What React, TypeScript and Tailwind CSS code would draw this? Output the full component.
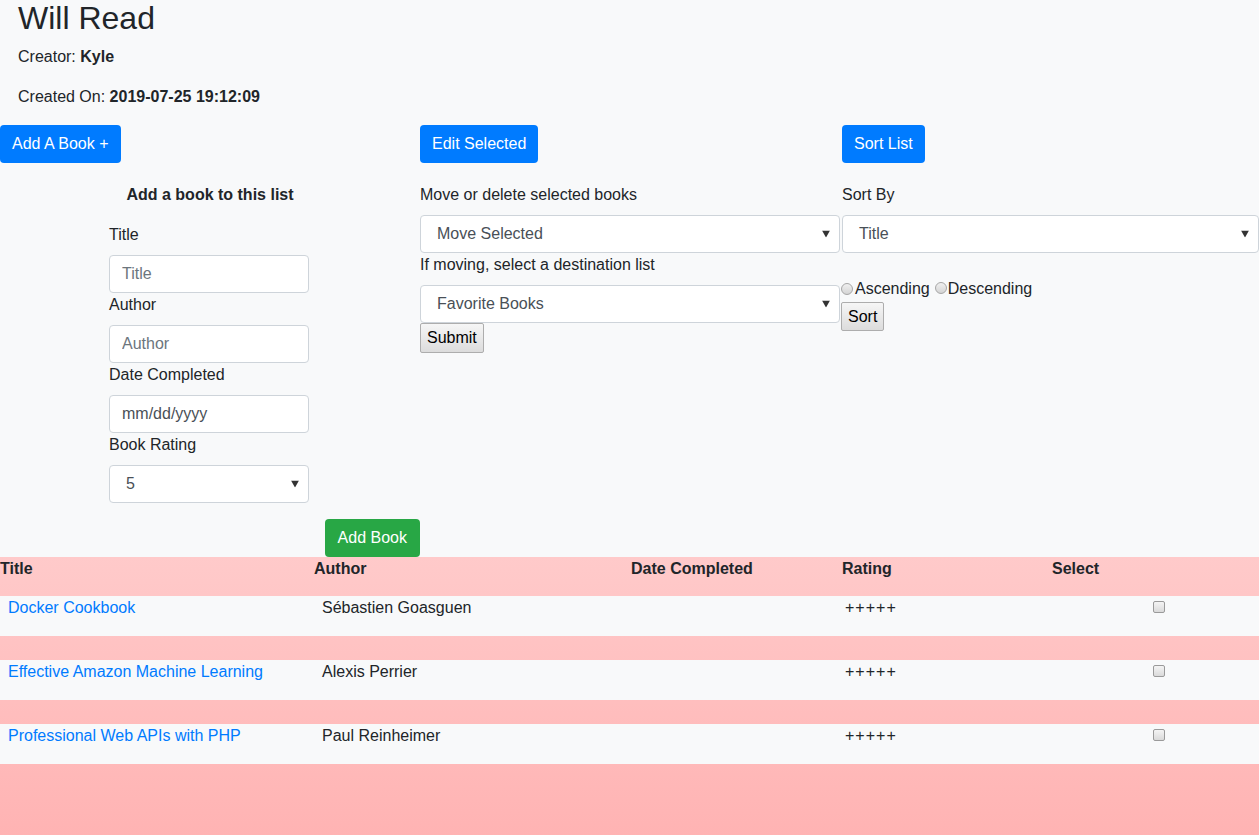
import type { ReactNode } from "react";

const books = [
  { title: "Docker Cookbook", author: "Sébastien Goasguen" },
  { title: "Effective Amazon Machine Learning", author: "Alexis Perrier" },
  { title: "Professional Web APIs with PHP", author: "Paul Reinheimer" },
];

const Caret = () => (
  <svg
    width="8"
    height="7"
    viewBox="0 0 8 7"
    className="pointer-events-none absolute right-[9px] top-1/2 -translate-y-1/2"
  >
    <polygon points="0,0 8,0 4,7" fill="#333" />
  </svg>
);

const FakeSelect = ({ value, className }: { value: string; className: string }) => (
  <div
    className={`relative flex h-[38px] items-center rounded border border-[#ced4da] bg-white pl-4 text-[#495057] ${className}`}
  >
    {value}
    <Caret />
  </div>
);

const TextInput = ({ placeholder, dark }: { placeholder: string; dark?: boolean }) => (
  <input
    type="text"
    placeholder={placeholder}
    className={`h-[38px] w-[200px] rounded border border-[#ced4da] bg-white px-3 outline-none ${
      dark ? "placeholder:text-[#495057]" : "placeholder:text-[#6c757d]"
    }`}
  />
);

const PrimaryButton = ({ children, className = "" }: { children: ReactNode; className?: string }) => (
  <button className={`h-[38px] self-start rounded bg-[#007bff] px-3 text-white ${className}`}>
    {children}
  </button>
);

const PlainButton = ({ children, className = "" }: { children: ReactNode; className?: string }) => (
  <button
    className={`self-start rounded-[2px] border border-[#adadad] bg-linear-to-b from-[#f6f6f6] to-[#dcdcdc] px-[6px] text-black ${className}`}
  >
    {children}
  </button>
);

const Radio = () => (
  <span className="inline-block h-3 w-3 rounded-full border border-[#a6a6a6] bg-linear-to-b from-[#f0f0f0] to-[#d4d4d4]" />
);

const Checkbox = () => (
  <span className="mt-[5px] inline-block h-[12px] w-[12px] rounded-[2px] border border-[#9a9a9a] bg-linear-to-b from-[#f4f4f4] to-[#dadada]" />
);

export default function App() {
  return (
    <div className="flex min-h-screen flex-col overflow-hidden bg-[#f8f9fa] font-['Liberation_Sans',Arial,sans-serif] text-base leading-6 text-[#212529]">
      {/* Header */}
      <div className="pl-[18px]">
        <h2 className="mb-2 text-[32px] leading-[37px]">Will Read</h2>
        <p className="mb-4">
          Creator: <b>Kyle</b>
        </p>
        <p className="mb-4">
          Created On: <b>2019-07-25 19:12:09</b>
        </p>
      </div>

      {/* Three panels */}
      <div className="grid grid-cols-[420px_421px_1fr]">
        <div className="flex flex-col">
          <PrimaryButton>Add A Book +</PrimaryButton>
          <h5 className="mt-5 mb-4 text-center font-bold">Add a book to this list</h5>
          <div className="ml-[109px] flex w-[200px] flex-col">
            <label className="mb-2">Title</label>
            <TextInput placeholder="Title" />
            <label className="mb-2">Author</label>
            <TextInput placeholder="Author" />
            <label className="mb-2">Date Completed</label>
            <TextInput placeholder="mm/dd/yyyy" dark />
            <label className="mb-2">Book Rating</label>
            <FakeSelect value="5" className="w-[200px]" />
          </div>
          <button className="mt-4 h-[38px] self-end rounded bg-[#28a745] px-[13px] text-white">Add Book</button>
        </div>

        <div className="flex flex-col">
          <PrimaryButton>Edit Selected</PrimaryButton>
          <label className="mt-5 mb-2">Move or delete selected books</label>
          <FakeSelect value="Move Selected" className="w-[420px]" />
          <label className="mb-2">If moving, select a destination list</label>
          <FakeSelect value="Favorite Books" className="w-[420px]" />
          <PlainButton className="h-[30px]">Submit</PlainButton>
        </div>

        <div className="flex flex-col">
          <PrimaryButton className="ml-px">Sort List</PrimaryButton>
          <label className="mt-5 mb-2 ml-px">Sort By</label>
          <FakeSelect value="Title" className="ml-px" />
          <div className="h-6" />
          <div className="flex items-center">
            <Radio />
            <span className="ml-[2px]">Ascending</span>
            <span className="ml-[5px]">
              <Radio />
            </span>
            <span className="ml-px">Descending</span>
          </div>
          <PlainButton className="mt-px h-[29px]">Sort</PlainButton>
        </div>
      </div>

      {/* Book table */}
      <div className="flex-1 bg-linear-to-b from-[#ffcaca] to-[#ffb3b3]">
        <div className="grid h-[39px] grid-cols-[314px_317px_211px_210px_1fr] font-bold">
          <div>Title</div>
          <div>Author</div>
          <div>Date Completed</div>
          <div>Rating</div>
          <div>Select</div>
        </div>
        {books.map((book, i) => (
          <div key={book.title}>
            {i > 0 && <div className="h-6" />}
            <div className="grid h-10 grid-cols-[314px_317px_211px_210px_1fr] bg-[#f8f9fa]">
              <a href="#" className="pl-2 text-[#007bff]">
                {book.title}
              </a>
              <div className="pl-2">{book.author}</div>
              <div />
              <div className="pl-[3px] tracking-[1px]">+++++</div>
              <div className="pl-[101px]">
                <Checkbox />
              </div>
            </div>
          </div>
        ))}
      </div>
    </div>
  );
}
